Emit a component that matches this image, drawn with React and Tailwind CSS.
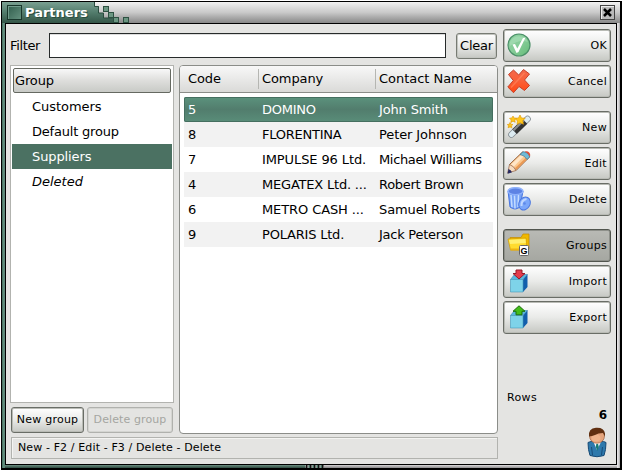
import React from "react";

const rows = [
  ["5", "DOMINO", "John Smith", "tracking-[-0.25px]", "tracking-[-0.15px]"],
  ["8", "FLORENTINA", "Peter Johnson", "tracking-[-0.25px]", "tracking-[-0.1px]"],
  ["7", "IMPULSE 96 Ltd.", "Michael Williams", "tracking-[-0.1px]", "tracking-[-0.35px]"],
  ["4", "MEGATEX Ltd. ...", "Robert Brown", "tracking-[-0.2px]", "tracking-[-0.3px]"],
  ["6", "METRO CASH ...", "Samuel Roberts", "tracking-[-0.1px]", "tracking-[-0.12px]"],
  ["9", "POLARIS Ltd.", "Jack Peterson", "tracking-[-0.2px]", "tracking-[-0.25px]"],
];

const Check = () => (
  <svg width="24" height="24" viewBox="0 0 24 24">
    <defs>
      <linearGradient id="ok" x1="0" y1="0" x2="1" y2="1">
        <stop offset="0" stopColor="#8fd3a2" />
        <stop offset=".5" stopColor="#86cc98" />
        <stop offset="1" stopColor="#62bb77" />
      </linearGradient>
    </defs>
    <circle cx="12" cy="12" r="11" fill="url(#ok)" stroke="#4b8f68" strokeWidth="1.2" />
    <path d="M3 9a10 10 0 0 1 18 0q-9-3-18 4z" fill="#b2e3bf" opacity=".5" />
    <path d="M5.500 11.500L8 11l2.300 4.500L16 5l2.500-.5-7 14.500-2 1z" fill="#fff" />
  </svg>
);

const Cross = () => (
  <svg width="24" height="24" viewBox="0 0 24 24">
    <defs>
      <linearGradient id="no" x1="0" y1="0" x2="0" y2="1">
        <stop offset="0" stopColor="#f4694c" />
        <stop offset=".5" stopColor="#fa6038" />
        <stop offset="1" stopColor="#ff4713" />
      </linearGradient>
    </defs>
    <path d="M1.500 5.500L6.500 1l5.200 5L16.500.5l6 4.500-5 6 5 5.500-5 5-5.500-4-5.500 6.200L.8 18l5.500-6.500z" fill="url(#no)" stroke="#c4402a" strokeWidth="1" strokeLinejoin="round" />
    <path d="M4 18.500L17.500 4" stroke="#ff8a62" strokeWidth="1.500" opacity=".6" />
  </svg>
);

const Wand = () => (
  <svg width="24" height="24" viewBox="0 0 24 24">
    <path d="M4.500 19.500L20.500 4" stroke="#7f888e" strokeWidth="6.500" strokeLinecap="round" />
    <path d="M4.500 19.500L20.500 4" stroke="#dcebf1" strokeWidth="5" strokeLinecap="round" />
    <path d="M7.500 16.700L18 6.500" stroke="#333" strokeWidth="6.500" />
    <path d="M6.500 15.200L16.800 5.200" stroke="#8d8d8d" strokeWidth="2.200" />
    <g fill="#ffc61b" stroke="#dc9500" strokeWidth=".6">
      <path d="M13 0l1.500 3 3.700.2-2.500 2.600.8 3.500-3.300-1.500-3.200 1.700.5-3.500L8 3.500l3.500-.6z" />
      <path d="M6 1l1 2 2.500.2-1.700 1.700.4 2.400L6 6.200 3.900 7.400l.2-2.500L2.500 3.300l2.500-.4z" />
      <path d="M3 7.500l.9 1.700 2 .3-1.400 1.300.3 2L3 11.900l-1.900.9.4-2L.3 9.500l2-.2z" />
    </g>
  </svg>
);

const Pencil = () => (
  <svg width="24" height="24" viewBox="0 0 24 24">
    <path d="M2.500 13.500L15.500 1q4.500-.5 7 5L9 19.500z" fill="#fbc88f" stroke="#97623f" strokeWidth="1" />
    <path d="M4 13.500L15 3l2.500 1.500L6.500 16z" fill="#ffe6c8" />
    <path d="M8.500 18L20.500 6.500" stroke="#eb9a55" strokeWidth="1.800" />
    <path d="M13 3.500L16 .8q5 0 6.800 5L20 8.500q-2-4-7-5z" fill="#6fbad6" stroke="#286a91" strokeWidth=".6" />
    <path d="M17.500 .6Q20.500-.5 22.200 1.500T22.800 5.500Q21 2 17.500.6z" fill="#dd5037" />
    <path d="M2.500 13.500L.7 22 9 19.500q-2-4.500-6.500-6z" fill="#f8dcc0" stroke="#8f6044" strokeWidth=".7" />
    <path d="M1.500 18L.5 22.800l4.500-1.500q-1-2.500-3.500-3.300z" fill="#26295f" />
  </svg>
);

const Trash = () => (
  <svg width="24" height="24" viewBox="0 0 24 24">
    <path d="M1 4l2 16q5 4 10 0l3-16z" fill="#75a1f6" stroke="#4774df" />
    <path d="M4 8l1 12M7.500 8.500l.5 13M11.500 8l-.5 12" stroke="#c4dcff" strokeWidth="1.500" />
    <ellipse cx="8.500" cy="4.200" rx="7.500" ry="3.500" fill="#5d83e4" stroke="#8fb2fb" strokeWidth="1.500" />
    <ellipse cx="17.500" cy="16.500" rx="5.500" ry="6.800" transform="rotate(28 17.500 16.500)" fill="#7ba7fa" stroke="#4c78df" />
    <path d="M14.500 19q-.5-6 5-7" fill="none" stroke="#bfd6ff" strokeWidth="2" />
    <circle cx="17.500" cy="16.500" r="1.300" fill="#5d88e8" />
  </svg>
);

const Folder = () => (
  <svg width="24" height="24" viewBox="0 0 24 24">
    <path d="M3 4.500h11l2-3.500h6v15H5z" fill="#f0b800" stroke="#c38b00" strokeWidth=".7" />
    <path d="M1 6l18-1 1 12H3.500z" fill="#ffdc2e" stroke="#d29b00" strokeWidth=".7" />
    <path d="M2 7l16.500-1 .3 4L3 11z" fill="#fff070" />
    <path d="M3.500 16.500H20" stroke="#eeb411" strokeWidth="2" />
    <rect x="12.500" y="12.500" width="9" height="10" rx="1" fill="#fff" stroke="#666" />
    <text x="13.600" y="20.800" fontSize="9" fontWeight="bold" fontFamily="Liberation Sans">G</text>
  </svg>
);

const Box = ({ up }) => (
  <svg width="24" height="24" viewBox="0 0 24 24">
    <path d="M3.500 10.500l4-5h13l-4.500 5z" fill="#58b8df" stroke="#3586b0" strokeWidth=".6" />
    <path d="M16 10.500l4.500-5V18L16 23z" fill="#125fac" />
    <path d="M3.500 10.500H16V23H3.500z" fill="#7ed3e9" stroke="#4597b8" strokeWidth=".6" />
    {up ? (
      <path d="M12 .8l6 5.500h-3v3.500H9V6.300H6z" fill="#43bd19" stroke="#1d6f0c" strokeWidth="1" />
    ) : (
      <path d="M9 1h6v3.500h3L12 10 6 4.500h3z" fill="#e43c4c" stroke="#951a29" strokeWidth="1" />
    )}
  </svg>
);

const Person = () => (
  <svg width="20" height="31" viewBox="0 0 20 31">
    <path d="M1 15.500q3-1.500 6-1h6q4-.5 6 1l-.5 7-1.500 6q-7 2.500-14 0l-1.500-6z" fill="#2e79ac" stroke="#174a75" />
    <path d="M6.500 15L10 23l4-8z" fill="#f5fbff" />
    <path d="M9.300 17h1.800l.7 3-1.500 4-1.500-4z" fill="#187b74" />
    <path d="M4.500 20l1 8M15.500 20l-1 8" stroke="#184c79" />
    <ellipse cx="10" cy="9" rx="7.500" ry="7.300" fill="#e5a47c" stroke="#9c6040" strokeWidth=".7" />
    <ellipse cx="9" cy="11" rx="4.500" ry="3.500" fill="#efb48c" />
    <path d="M2 9.500Q1 1.500 9 .8q8-.5 9 5.700v3q-1-2-2-3.500-5 0-8 2-3 1-6 1.500z" fill="#613011" />
  </svg>
);

const actions = [
  ["OK", Check, "mt-0"],
  ["Cancel", Cross, "mt-[3px]"],
  ["New", Wand, "mt-[13px]"],
  ["Edit", Pencil, "mt-[3px]"],
  ["Delete", Trash, "mt-[3px]"],
  ["Groups", Folder, "mt-[13px]"],
  ["Import", Box, "mt-[3px]"],
  ["Export", Box, "mt-[3px]"],
];

const tree = [
  ["Customers", "tracking-[-0.05px]"],
  ["Default group", "tracking-[-0.2px]"],
  ["Suppliers", "bg-[#4b7162] tracking-[-0.1px] text-white"],
  ["Deleted", "italic"],
];

const face = "bg-linear-to-b from-white via-[#e9eae8] to-[#c6c8c3]";

function Action({ label, Icon, gap }) {
  const pressed = label === "Groups";
  return (
    <button className={`flex h-[33px] w-[108px] shrink-0 items-center justify-between rounded-[3px] border pr-[3px] pb-px pl-[3px] text-[11px] tracking-[0.3px] ${gap} ${pressed ? "border-[#51554e] bg-linear-to-b from-[#b9bab5] to-[#a5a7a1] shadow-[inset_0_0_0_1px_#8e908a]" : `border-[#696d66] shadow-[inset_0_0_0_1px_#b9bbb5] ${face}`}`}>
      <Icon up={label === "Export"} />
      <span className="pt-[3px]">{label}</span>
    </button>
  );
}

export default function App() {
  return (
    <div className="h-[473px] w-[625px] overflow-hidden bg-white pt-px pl-px font-['DejaVu_Sans',sans-serif] text-[13px] text-black">
      <div className="flex h-[469px] w-[621px] flex-col bg-black pt-px pr-[2px] pb-[2px] pl-px">
        <header className="relative flex h-[21px] shrink-0 items-center justify-between bg-linear-to-b from-[#f2f2f2] via-[#c9c9c9] to-[#888]">
          <div className="flex h-full w-[92px] items-center bg-linear-to-b from-[#7aa092] via-[#527c6c] to-[#345648] pl-[5px]">
            <span className="h-[15px] w-[15px] border border-[#18362b] bg-linear-to-br from-[#315e4d] to-[#64917f] shadow-[inset_1px_1px_#719b8b]" />
            <span className="ml-[3px] text-[13px] leading-[20px] font-bold text-white [text-shadow:1px_1px_#294c3f]">Partners</span>
          </div>
          <svg className="absolute top-0 left-[91px]" width="40" height="21" viewBox="0 0 40 21">
            <defs>
              <linearGradient id="bar" x1="0" y1="0" x2="0" y2="21" gradientUnits="userSpaceOnUse">
                <stop offset="0" stopColor="#7aa092" />
                <stop offset=".5" stopColor="#527c6c" />
                <stop offset="1" stopColor="#345648" />
              </linearGradient>
            </defs>
            <path d="M0 0h1v4h5v7h5v5h9v5H0z" fill="url(#bar)" />
            <path d="M1.500 0v4.500h4v6.500h5v5h9" fill="none" stroke="#2a4c3e" />
            <g fill="#6b9682" stroke="#2d5041">
              <rect x="10.500" y="4.500" width="5" height="5" />
              <rect x="15.500" y="10.500" width="5" height="5" />
              <rect x="20.500" y="15.500" width="5" height="5" />
              <rect x="30.500" y="15.500" width="5" height="5" />
            </g>
          </svg>
          <button className="mr-[5px] flex h-[15px] w-[15px] items-center justify-center border border-[#444] bg-[#b9b9b9] shadow-[inset_1px_1px_#eee]">
            <svg width="9" height="9" viewBox="0 0 9 9"><path d="M1 1l7 7M8 1L1 8" stroke="#000" strokeWidth="2.500" /></svg>
          </button>
        </header>
        <div className="flex min-h-0 flex-1 flex-col bg-[linear-gradient(90deg,#3e6a59_0,#6c9888_2px,#4e7868_3px,#4e7868_303px,#c9c7c9_304px,#e4e2e4_616px,#aaa_618px)] pr-[3px] pl-[3px]">
          <div className="flex min-h-0 w-full flex-1 border border-black bg-[#e4e4e2] pl-[4px]">
            <div className="w-[488px] shrink-0">
              <div className="mt-[9px] flex h-[25px] items-center">
                <label className="w-[39px] tracking-[-0.35px]">Filter</label>
                <input aria-label="Filter" className="h-[25px] w-[397px] border border-[#272b2b] bg-white shadow-[inset_0_1px_#ddd]" />
                <button className={`ml-[10px] h-[26px] w-[41px] rounded-[3px] border border-[#777b73] text-[13px] tracking-[-0.2px] shadow-[inset_0_0_0_1px_#c3c5c0] ${face}`}>Clear</button>
              </div>
              <div className="mt-[7px] flex h-[369px]">
                <div className="w-[164px] shrink-0">
                  <div className="h-[338px] border border-[#b2b3af] bg-white px-px pt-px">
                    <div className="mx-px mt-px mb-px flex h-[25px] items-center rounded-[2px] border border-[#656961] bg-linear-to-b from-[#f8f8f8] via-[#dededc] to-[#c8cac6] pl-[1px] tracking-[-0.15px]">Group</div>
                    {tree.map(([t, style]) => (
                      <div key={t} className={`flex h-[25px] items-center pl-[20px] ${style}`}>{t}</div>
                    ))}
                  </div>
                  <div className="mt-[4px] ml-px flex gap-[3px] text-[11px]">
                    <button className={`h-[26px] w-[73px] rounded-[3px] border border-[#696d66] pt-px tracking-[0.25px] whitespace-nowrap shadow-[inset_0_0_0_1px_#b9bbb5] ${face}`}>New group</button>
                    <button className="h-[26px] w-[86px] rounded-[3px] border border-[#b0b1ad] pt-px tracking-[0.1px] whitespace-nowrap text-[#a5a6a1] shadow-[inset_0_0_0_1px_#d4d5d1]">Delete group</button>
                  </div>
                </div>
                <section className="ml-[5px] h-[369px] w-[319px] overflow-hidden rounded-[4px] border border-[#8b8d89] bg-white">
                  <div className="flex h-[27px] items-center border-b border-[#8b8d89] bg-linear-to-b from-[#f8f8f8] to-[#dadad8] pl-[8px]">
                    <span className="w-[70px] tracking-[-0.1px]">Code</span>
                    <span className="flex h-[20px] w-[117px] items-center border-l border-[#b5b6b2] pl-[3px] tracking-[-0.1px]">Company</span>
                    <span className="flex h-[20px] items-center border-l border-[#b5b6b2] pl-[3px] tracking-[-0.03px] whitespace-nowrap">Contact Name</span>
                  </div>
                  <div className="mt-[4px] ml-[4px] w-[309px]">
                    {rows.map((r, i) => (
                      <div key={r[0]} className={`flex h-[25px] items-center pl-[4px] whitespace-nowrap ${i === 0 ? "rounded-[2px] bg-linear-to-b from-[#5b927d] via-[#527d6d] to-[#598d79] text-white shadow-[inset_0_0_0_1px_#456f60]" : i % 2 ? "bg-[#f2f2f2]" : ""}`}>
                        <span className="w-[74px]">{r[0]}</span>
                        <span className={`w-[117px] ${r[3]}`}>{r[1]}</span>
                        <span className={r[4]}>{r[2]}</span>
                      </div>
                    ))}
                  </div>
                </section>
              </div>
              <footer className="mt-[3px] ml-px flex h-[22px] items-center border border-[#b2b3af] pl-[6px] text-[11px] tracking-[0.12px] shadow-[inset_1px_1px_#f4f4f2]">New - F2 / Edit - F3 / Delete - Delete</footer>
            </div>
            <aside className="ml-[5px] flex w-[108px] shrink-0 flex-col pt-[5px]">
              {actions.map(([label, Icon, gap]) => <Action key={label} label={label} Icon={Icon} gap={gap} />)}
              <div className="mt-[56px] ml-[4px] text-[11px] leading-[16px] tracking-[0.35px]">Rows</div>
              <div className="mt-px mr-[4px] text-right text-[12px] leading-[16px] font-bold">6</div>
              <div className="mt-[4px] mr-[4px] flex justify-end"><Person /></div>
            </aside>
          </div>
          <div className="flex h-[3px] shrink-0 bg-linear-to-b from-white/20 to-black/30 pl-[301px]">
            <span className="h-[3px] w-[18px] bg-[repeating-linear-gradient(90deg,#111_0,#111_1px,#c9c9c9_2px,#476f60_3px,#476f60_4px)]" />
          </div>
        </div>
      </div>
    </div>
  );
}
